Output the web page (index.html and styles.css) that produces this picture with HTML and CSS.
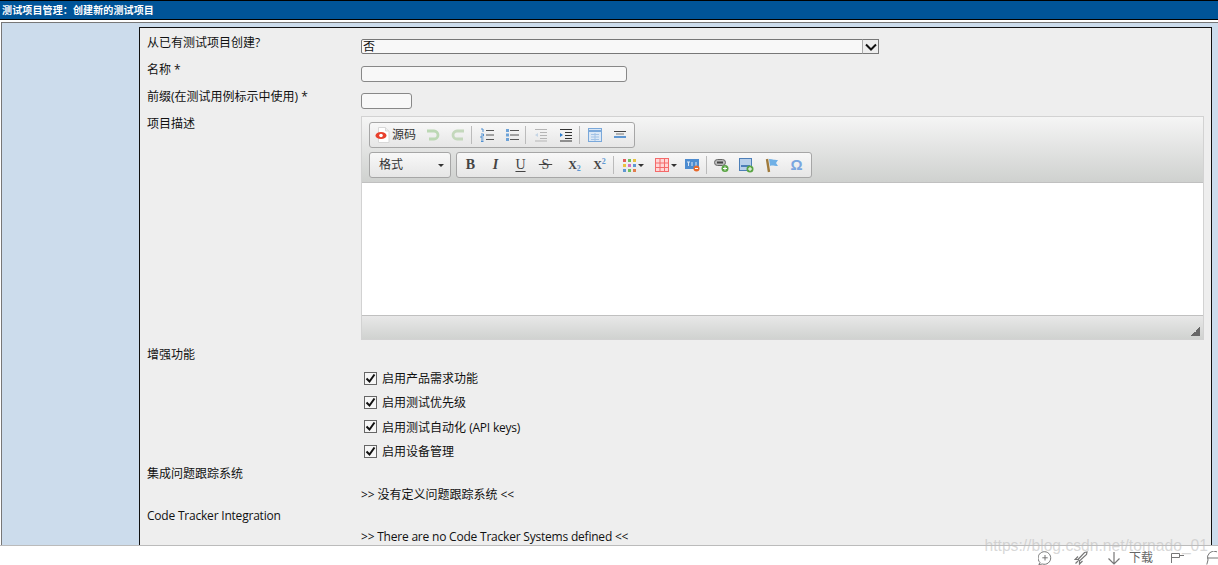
FILE: index.html
```html
<!DOCTYPE html>
<html lang="zh">
<head>
<meta charset="utf-8">
<title>测试项目管理</title>
<link rel="stylesheet" href="styles.css">
</head>
<body>
<header class="title-bar">测试项目管理：创建新的测试项目</header>
<main class="frame">
  <div class="panel">
    <form class="form">
      <div class="row row-select">
        <span class="label">从已有测试项目创建?</span>
        <div class="select"><span class="select-value">否</span><span class="select-arrow"><svg width="12" height="8" viewBox="0 0 12 8"><path d="M1 1.500 6 6.500 11 1.500" fill="none" stroke="#111" stroke-width="2"/></svg></span></div>
      </div>
      <div class="row row-name">
        <span class="label">名称 *</span>
        <span class="input input-name"></span>
      </div>
      <div class="row row-prefix">
        <span class="label">前缀(在测试用例标示中使用) *</span>
        <span class="input input-prefix"></span>
      </div>
      <div class="row row-editor">
        <span class="label">项目描述</span>
        <div class="editor">
          <div class="toolbar">
            <div class="tool-row">
              <div class="group">
                <span class="btn btn-source">
                  <svg width="15" height="16" viewBox="0 0 15 16"><path d="M3.500 .5h7l3.500 3.500v11.500h-10.500z" fill="#fff" stroke="#d8d8d8"/><path d="M10.500 .5v3.500h3.500" fill="#eee" stroke="#d8d8d8"/><ellipse cx="6" cy="8.500" rx="5.500" ry="3.600" fill="#e8402c"/><circle cx="6" cy="8.500" r="1.800" fill="#fff"/></svg>
                  <span>源码</span>
                </span>
                <span class="btn"><svg width="14" height="14" viewBox="0 0 14 14"><path d="M1 3h7a4 4 0 0 1 0 8H3" fill="none" stroke="#bcd8b4" stroke-width="2.800"/></svg></span>
                <span class="btn"><svg width="14" height="14" viewBox="0 0 14 14"><path d="M13 3H6a4 4 0 0 0 0 8h6" fill="none" stroke="#c4d8bc" stroke-width="2.800"/></svg></span>
                <i class="sep"></i>
                <span class="btn"><svg width="14" height="14" viewBox="0 0 14 14"><path d="M6 2.500h8M6 7h8M6 11.500h8" stroke="#555"/><path d="M1 1h2v3M1 6h2.500v2H1v2h2.500M1 12h2.500M1 13.500h2.500" fill="none" stroke="#4f8fd0"/></svg></span>
                <span class="btn"><svg width="14" height="14" viewBox="0 0 14 14"><path d="M5 2.500h9M5 7h9M5 11.500h9" stroke="#555"/><path d="M1 1h3v3H1zM1 5.500h3v3H1zM1 10h3v3H1z" fill="#6ea3d8"/></svg></span>
                <i class="sep"></i>
                <span class="btn"><svg width="14" height="14" viewBox="0 0 14 14"><path d="M1 1.500h12M6 4.500h7M6 7.500h7M6 10.500h7M1 13h12" stroke="#b5b5b5"/><path d="M4 5v4L1 7z" fill="#c5d5e5"/></svg></span>
                <span class="btn"><svg width="14" height="14" viewBox="0 0 14 14"><path d="M1 1.500h12M6 4.500h7M6 7.500h7M6 10.500h7M1 13h12" stroke="#333"/><path d="M1 5v4l3-2z" fill="#2f7fd0"/></svg></span>
                <i class="sep"></i>
                <span class="btn"><svg width="14" height="14" viewBox="0 0 14 14"><rect x=".5" y=".5" width="13" height="13" fill="#dbe8f6" stroke="#7aa8da"/><path d="M1 3h12" stroke="#7aa8da" stroke-width="2"/><path d="M3 6.500h8M3 9h8M3 11.500h8M7 5v8" stroke="#a3c3e6"/></svg></span>
                <span class="btn"><svg width="14" height="14" viewBox="0 0 14 14"><path d="M1 3.500h12" stroke="#444"/><path d="M3 6h8" stroke="#777"/><path d="M1 9h12" stroke="#5f97d2" stroke-width="2"/></svg></span>
              </div>
            </div>
            <div class="tool-row">
              <div class="combo"><span>格式</span><i class="caret"></i></div>
              <div class="group group-format">
                <span class="btn glyph bold">B</span>
                <span class="btn glyph italic">I</span>
                <span class="btn glyph under">U</span>
                <span class="btn glyph strike">&thinsp;S&thinsp;</span>
                <span class="btn glyph script gap-left">X<sub>2</sub></span>
                <span class="btn glyph script">X<sup>2</sup></span>
                <i class="sep"></i>
                <span class="btn btn-color"><svg width="13" height="13" viewBox="0 0 13 13"><path d="M0 0h3v3H0z" fill="#e25c5c"/><path d="M5 0h3v3H5z" fill="#6fbf5f"/><path d="M10 0h3v3h-3z" fill="#e9c33f"/><path d="M0 5h3v3H0z" fill="#e9c33f"/><path d="M5 5h3v3H5z" fill="#d86fc0"/><path d="M10 5h3v3h-3z" fill="#5f97d2"/><path d="M0 10h3v3H0z" fill="#5f97d2"/><path d="M5 10h3v3H5z" fill="#6fbf5f"/><path d="M10 10h3v3h-3z" fill="#e27d4c"/></svg><i class="caret"></i></span>
                <span class="btn btn-table"><svg width="14" height="14" viewBox="0 0 14 14"><rect x=".5" y=".5" width="13" height="13" fill="#ffd6d6" stroke="#f46a6a"/><path d="M5 1v12M9.500 1v12M1 5h12M1 9.500h12" stroke="#f46a6a"/></svg><i class="caret"></i></span>
                <span class="btn"><svg width="15" height="14" viewBox="0 0 15 14"><rect y="1" width="14" height="10" fill="#4d8cd0"/><path d="M2 4h3M3.500 4v4M7 4v4M11 4v4" stroke="#dbe8f6"/><circle cx="11.500" cy="10.500" r="3" fill="#e8692c"/><path d="M10 10.500h3" stroke="#fff"/></svg></span>
                <i class="sep"></i>
                <span class="btn"><svg width="15" height="15" viewBox="0 0 15 15"><rect x=".5" y="1.500" width="11" height="6" rx="3" fill="#bbb" stroke="#666"/><path d="M3 4.500h6" stroke="#444" stroke-width="2"/><circle cx="11" cy="10.500" r="3.500" fill="#5aa544"/><path d="M9 10.500h4M11 8.500v4" stroke="#fff"/></svg></span>
                <span class="btn"><svg width="15" height="15" viewBox="0 0 15 15"><rect x=".5" y=".5" width="12" height="12" fill="#b8d0ea" stroke="#4d7fb8"/><path d="M2 8h9" stroke="#4d7fb8" stroke-width="2"/><circle cx="11" cy="11" r="3.500" fill="#5aa544"/><path d="M9 11h4M11 9v4" stroke="#fff"/></svg></span>
                <span class="btn"><svg width="14" height="15" viewBox="0 0 14 15"><path d="M2 1l2 13" stroke="#a07a3c" stroke-width="2.400"/><path d="M4 1c3 0 4 1 9 1l-2 3 2 3c-4 0-6-1-8 0z" fill="#6fb0e6"/></svg></span>
                <span class="btn omega">Ω</span>
              </div>
            </div>
          </div>
          <div class="edit-area"></div>
          <div class="edit-foot"><i class="resize"></i></div>
        </div>
      </div>
      <div class="row row-head"><span class="label">增强功能</span></div>
      <label class="check"><span class="box"><svg width="11" height="11" viewBox="0 0 11 11"><path d="M1.500 5.500 4.500 8.500 9.500 1.500" fill="none" stroke="#111" stroke-width="2"/></svg></span>启用产品需求功能</label>
      <label class="check"><span class="box"><svg width="11" height="11" viewBox="0 0 11 11"><path d="M1.500 5.500 4.500 8.500 9.500 1.500" fill="none" stroke="#111" stroke-width="2"/></svg></span>启用测试优先级</label>
      <label class="check"><span class="box"><svg width="11" height="11" viewBox="0 0 11 11"><path d="M1.500 5.500 4.500 8.500 9.500 1.500" fill="none" stroke="#111" stroke-width="2"/></svg></span><span>启用测试自动化 <span class="en">(API keys)</span></span></label>
      <label class="check"><span class="box"><svg width="11" height="11" viewBox="0 0 11 11"><path d="M1.500 5.500 4.500 8.500 9.500 1.500" fill="none" stroke="#111" stroke-width="2"/></svg></span>启用设备管理</label>
      <div class="row row-line row-first"><span class="label">集成问题跟踪系统</span></div>
      <div class="note"><span class="en">&gt;&gt;</span> 没有定义问题跟踪系统 <span class="en">&lt;&lt;</span></div>
      <div class="row row-line"><span class="label en">Code Tracker Integration</span></div>
      <div class="note en">&gt;&gt; There are no Code Tracker Systems defined &lt;&lt;</div>
    </form>
  </div>
</main>
<footer class="bottom">
  <svg class="act act-1" width="14" height="14" viewBox="0 0 14 14"><path d="M2 11.500A6.300 6.300 0 1 1 4.500 13L.8 13.500zM7 4v5.500M4.300 6.800h5.400" fill="none" stroke="#777"/></svg>
  <svg class="act act-2" width="14" height="14" viewBox="0 0 14 14"><path d="M4 8.500 10.500 1.500 13 1l-.5 2.500L5.500 10zM4 8.500 1 8.500 4 5.500M5.500 10v3l3-3M1.500 12.500 4 10" fill="none" stroke="#777" stroke-width="1.200"/></svg>
  <svg class="act act-3" width="12" height="13" viewBox="0 0 12 13"><path d="M6 0v12M.5 6.500 6 12l5.500-5.500" fill="none" stroke="#777" stroke-width="1.200"/></svg>
  <span class="act-text">下载</span>
  <svg class="act act-4" width="13" height="10" viewBox="0 0 13 10"><path d="M.5 10V.5h8v4h-8M8.500 2.500h4.500" fill="none" stroke="#777"/></svg>
  <svg class="act act-5" width="16" height="14" viewBox="0 0 16 14"><path d="M11 .8A6.500 6.500 0 0 0 2 9L.8 13.500M1 7h12" fill="none" stroke="#777"/></svg>
</footer>
<div class="watermark">https://blog.csdn.net/tornado_01</div>
</body>
</html>
```
FILE: styles.css
```css
* { box-sizing: border-box; }
html, body { margin: 0; height: 565px; overflow: hidden; background: #fff; }
body {
  display: flex;
  flex-direction: column;
  position: relative;
  font: 12px/16px "Open Sans", "Noto Sans CJK SC", sans-serif;
  color: #111;
}
.en { letter-spacing: -.21px; }
.title-bar {
  height: 20px;
  flex: none;
  background: #005498;
  border-top: 1px solid #000;
  border-bottom: 1px solid #000;
  color: #fff;
  font-weight: 700;
  font-size: 10px;
  letter-spacing: .13px;
  line-height: 19px;
  padding-left: 2px;
  white-space: nowrap;
}
.frame { flex: none; height: 525px; padding-top: 2px; overflow: hidden; }
.panel {
  height: 100%;
  margin-left: 1px;
  background: #ccdcec;
  border-top: 1px solid #777;
  border-left: 1px solid #777;
  padding: 4px 6px 0 137px;
  overflow: hidden;
}
.form {
  height: 100%;
  background: #eee;
  border: 1px solid #111;
  border-bottom: 0;
  padding-left: 7px;
}
.row { display: flex; align-items: flex-start; }
.label { width: 214px; flex: none; white-space: nowrap; }
.row-select { height: 38px; }
.row-select .label { margin-top: 7px; }
.select {
  width: 518px;
  height: 15px;
  margin-top: 11px;
  display: flex;
  background: #f8f8f8;
  border: 1px solid #777;
  border-radius: 2px;
  line-height: 14px;
  padding-left: 1px;
}
.select-value { flex: 1; }
.select-arrow {
  width: 17px;
  height: 15px;
  margin: -1px -1px 0 0;
  background: #eee;
  border: 1px solid #777;
  border-left-color: #aaa;
  display: flex;
  align-items: center;
  justify-content: center;
}
.input { display: block; height: 16px; background: #f8f8f8; border: 1px solid #888; border-radius: 3px; }
.input-name { width: 266px; }
.input-prefix { width: 51px; }
.row-name { height: 27px; }
.row-name .label { margin-top: -4px; }
.row-prefix { height: 23px; }
.row-prefix .label { margin-top: -4px; }
.row-editor { height: 231px; }
.editor {
  width: 843px;
  height: 224px;
  border: 1px solid #d2d2d2;
  display: flex;
  flex-direction: column;
  background: #fff;
}
.toolbar {
  height: 66px;
  flex: none;
  padding: 5px 0 0 7px;
  background: linear-gradient(#f5f5f5, #cfd1cf);
  border-bottom: 1px solid #c0c0c0;
}
.tool-row { display: flex; gap: 5px; height: 30px; }
.group {
  height: 26px;
  display: flex;
  align-items: center;
  padding: 0 2px 0 1px;
  background: linear-gradient(#f8f8f8, #e6e6e6);
  border: 1px solid #a6a6a6;
  border-radius: 3px;
}
.btn {
  width: 25px;
  height: 24px;
  flex: none;
  display: flex;
  align-items: center;
  justify-content: center;
  gap: 2px;
}
.btn-source { width: 49px; padding-left: 4px; justify-content: flex-start; color: #333; }
.sep { width: 1px; height: 18px; margin: 0 2px 0 1px; background: #bbb; flex: none; }
.combo {
  width: 82px;
  height: 26px;
  padding: 0 6px 0 9px;
  display: flex;
  align-items: center;
  justify-content: space-between;
  background: linear-gradient(#f8f8f8, #e6e6e6);
  border: 1px solid #a6a6a6;
  border-radius: 3px;
  color: #333;
}
.caret { width: 0; height: 0; border: 3px solid transparent; border-top-color: #333; border-bottom: 0; flex: none; }
.glyph { font-family: "Liberation Serif", serif; font-size: 14px; color: #444; white-space: pre; }
.bold { font-weight: 700; }
.italic { font-style: italic; font-weight: 700; }
.under { text-decoration: underline; text-underline-offset: 2px; }
.strike { text-decoration: line-through; }
.script { font-weight: 700; font-size: 12px; gap: 0; }
.script sub, .script sup { font-size: 8px; line-height: 8px; color: #5f97d2; }
.script sub { margin-top: 8px; }
.script sup { margin-top: -6px; }
.gap-left { margin-left: 4px; }
.btn-color { width: 35px; }
.btn-table { width: 29px; }
.omega { font-family: "Liberation Sans", sans-serif; font-weight: 700; font-size: 15px; color: #7aa6e0; }
.edit-area { height: 132px; flex: none; background: #fff; }
.edit-foot {
  flex: 1;
  display: flex;
  justify-content: flex-end;
  align-items: flex-end;
  padding: 0 3px 3px 0;
  background: linear-gradient(#e8e8e8, #d0d2d0);
  border-top: 1px solid #c0c0c0;
}
.resize { width: 9px; height: 9px; background: linear-gradient(135deg, transparent 50%, #666 50%); }
.row-head { height: 20px; }
.check {
  height: 24.300px;
  margin-left: 217px;
  display: flex;
  align-items: center;
  gap: 5px;
  white-space: nowrap;
}
.box {
  width: 11px;
  height: 11px;
  flex: none;
  background: #f6f6f6;
  border: 1px solid #666;
  box-sizing: content-box;
  margin-top: -2px;
  display: flex;
}
.box svg { flex: none; }
.row-line { height: 16px; }
.row-first { margin-top: 1.500px; }
.note { height: 26px; padding-top: 5px; margin-left: 214px; white-space: nowrap; }
.bottom {
  flex: 1;
  min-height: 0;
  display: flex;
  align-items: center;
  justify-content: flex-end;
  border-top: 1px solid #bbb;
  padding-top: 5px;
  overflow: hidden;
  background: #fff;
}
.act { flex: none; }
.act-1 { margin-right: 22px; }
.act-2 { margin-right: 20px; }
.act-3 { margin-right: 9px; }
.act-text { color: #666; margin-right: 18px; }
.act-4 { margin-right: 22px; }
.act-5 { margin-right: -4px; }
.watermark {
  position: absolute;
  right: 10px;
  top: 535px;
  font: 15.650px/22px "Liberation Sans", sans-serif;
  color: rgba(190, 190, 190, 0.6);
  white-space: nowrap;
}
```
